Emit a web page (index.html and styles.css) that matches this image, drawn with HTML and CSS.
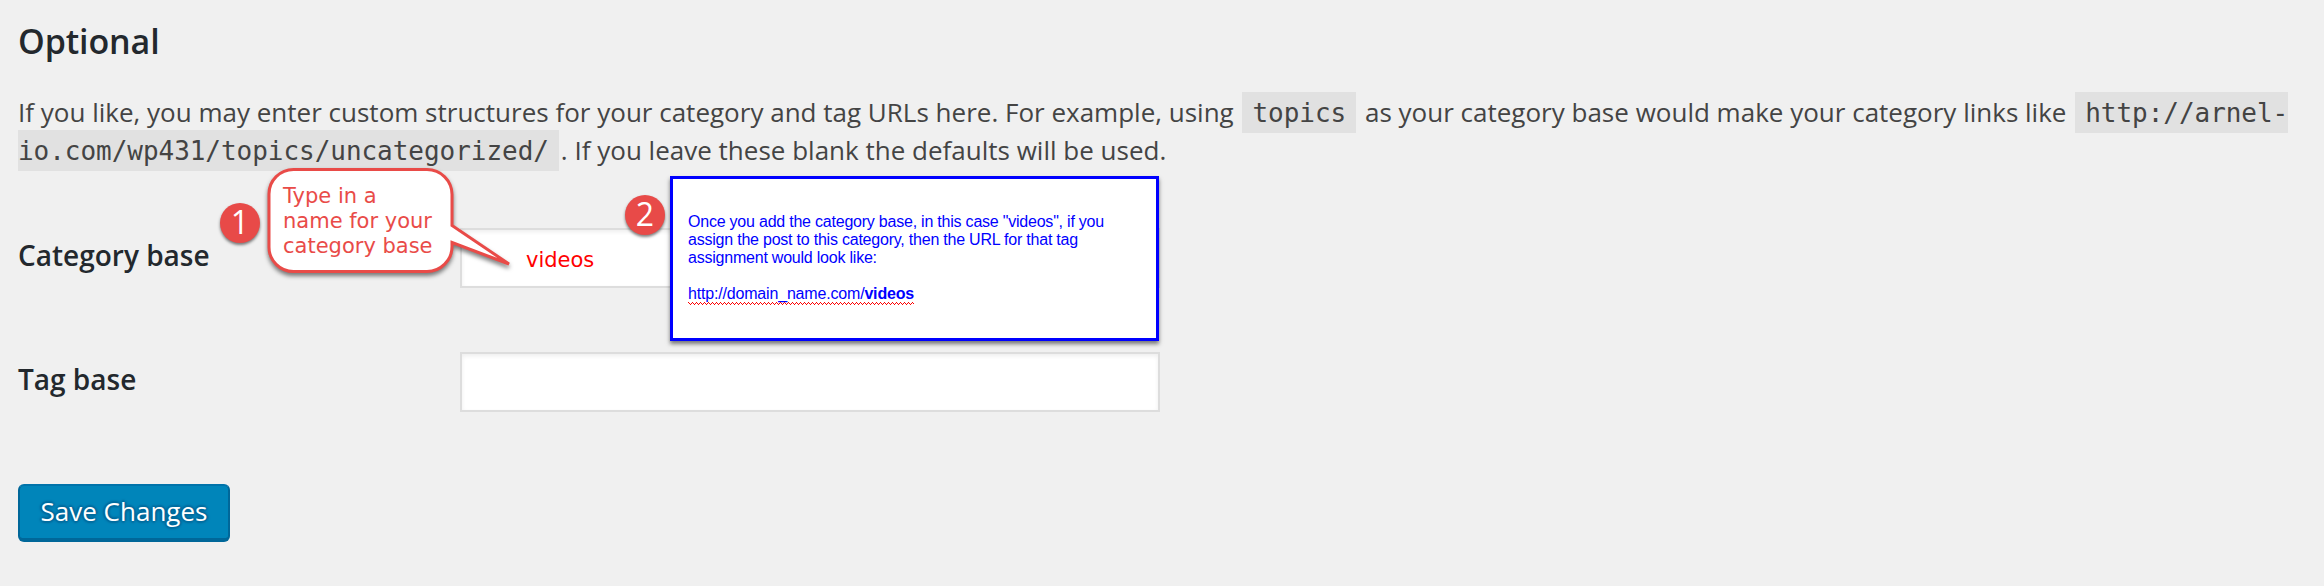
FILE: index.html
```html
<!DOCTYPE html>
<html lang="en">
<head>
<meta charset="utf-8">
<title>Permalink Settings</title>
<link rel="stylesheet" href="styles.css">
</head>
<body>
<main class="settings">
  <h2 class="title">Optional</h2>
  <p class="intro">If you like, you may enter custom structures for your category and tag URLs here. For example, using <code>topics</code> as your category base would make your category links like <code>http://arnel-<br>io.com/wp431/topics/uncategorized/</code>. If you leave these blank the defaults will be used.</p>
  <form class="form">
    <div class="row">
      <label class="label">Category base</label>
      <div class="field"><span class="value">videos</span></div>
    </div>
    <div class="row">
      <label class="label">Tag base</label>
      <div class="field"></div>
    </div>
    <button class="save" type="button">Save Changes</button>
  </form>
</main>

<div class="badge badge-one">1</div>
<div class="callout">
  <svg class="callout-shape" width="260" height="120" viewBox="0 0 260 120">
    <path d="M28.500 5.500H162A25 25 0 0 1 187 30.500V61.500L244 100L187 78.500V82.500A25 25 0 0 1 162 107.500H28.500A24.500 24.500 0 0 1 4 83V30A24.500 24.500 0 0 1 28.500 5.500Z" fill="#fff" stroke="#e94b48" stroke-width="3"/>
  </svg>
  <p class="callout-text">Type in a<br>name for your<br>category base</p>
</div>
<div class="badge badge-two">2</div>
<div class="note">
  <p>Once you add the category base, in this case "videos", if you<br>assign the post to this category, then the URL for that tag<br>assignment would look like:</p>
  <p class="note-url">http://domain_name.com/<b>videos</b></p>
  <svg class="squiggle" width="226" height="4"><defs><pattern id="zig" width="4" height="4" patternUnits="userSpaceOnUse"><path d="M0 0h1v1h-1zM1 1h1v1h-1zM2 2h1v1h-1zM3 1h1v1h-1z" fill="#f00" shape-rendering="crispEdges"/></pattern></defs><rect width="226" height="4" fill="url(#zig)"/></svg>
</div>
</body>
</html>
```
FILE: styles.css
```css
* { box-sizing: border-box; }

body {
  margin: 0;
  height: 586px;
  overflow: hidden;
  position: relative;
  background: #f0f0f0;
  color: #444;
  font: 26px/38px "Open Sans", sans-serif;
}

.settings { padding: 17px 0 0 18px; }

.title {
  margin: 0;
  font-size: 34px;
  line-height: 48px;
  font-weight: 600;
  letter-spacing: -0.1px;
  color: #23282d;
}

.intro {
  margin: 28px 0 0;
  white-space: nowrap;
  letter-spacing: 0.004px;
}

.intro code {
  margin: 0 2px;
  padding: 6px 10px 5px;
  background: #e1e1e1;
  font: 26px/26px "DejaVu Sans Mono", monospace;
  letter-spacing: -0.04px;
}

.form { display: flex; flex-direction: column; align-items: flex-start; padding-top: 59px; }

.row { display: flex; width: 1142px; height: 60px; margin-bottom: 64px; }

.label {
  width: 442px;
  padding-top: 6px;
  font-size: 28px;
  line-height: 42px;
  font-weight: 600;
  color: #23282d;
}

.field {
  width: 700px;
  padding: 13px 0 0 64px;
  border: 2px solid #ddd;
  background: #fff;
  box-shadow: inset 0 2px 4px rgba(0, 0, 0, .07);
}

.value {
  display: block;
  color: #f00;
  font: 21px/34px "DejaVu Sans", sans-serif;
}

.save {
  width: 212px;
  height: 58px;
  margin-top: 8px;
  padding: 0 0 2px;
  border: 2px solid #0073aa;
  border-color: #0073aa #006799 #006799;
  border-bottom-width: 4px;
  border-radius: 6px;
  background: #0085ba;
  color: #fff;
  font: 26px/48px "Open Sans", sans-serif;
  text-shadow: 0 -2px 2px #006799, 2px 0 2px #006799, 0 2px 2px #006799, -2px 0 2px #006799;
}

.badge {
  position: absolute;
  width: 40px;
  height: 40px;
  border-radius: 50%;
  background: #e84a48;
  box-shadow: 0 2px 3px rgba(0, 0, 0, .5);
  color: #fff;
  font: 32px/38px "Open Sans", sans-serif;
  text-align: center;
}

.badge-one { left: 220px; top: 203px; }
.badge-two { left: 625px; top: 195px; }

.callout { position: absolute; left: 265px; top: 164px; }

.callout-shape {
  display: block;
  filter: drop-shadow(0 3px 2px rgba(0, 0, 0, .5));
}

.callout-text {
  position: absolute;
  left: 18px;
  top: 20px;
  margin: 0;
  color: #e94b48;
  white-space: nowrap;
  font: 21px/25px "DejaVu Sans", sans-serif;
}

.note {
  position: absolute;
  left: 670px;
  top: 176px;
  width: 489px;
  height: 165px;
  padding: 34px 15px;
  border: 3px solid #00f;
  background: #fff;
  box-shadow: 0 3px 4px rgba(0, 0, 0, .5);
  color: #00f;
  white-space: nowrap;
  font: 16px/18px "Liberation Sans", Arial, sans-serif;
  letter-spacing: -0.22px;
}

.note p { margin: 0; }
.note .note-url { margin-top: 18px; letter-spacing: -0.18px; }
.squiggle { display: block; margin-top: -1px; }
```
